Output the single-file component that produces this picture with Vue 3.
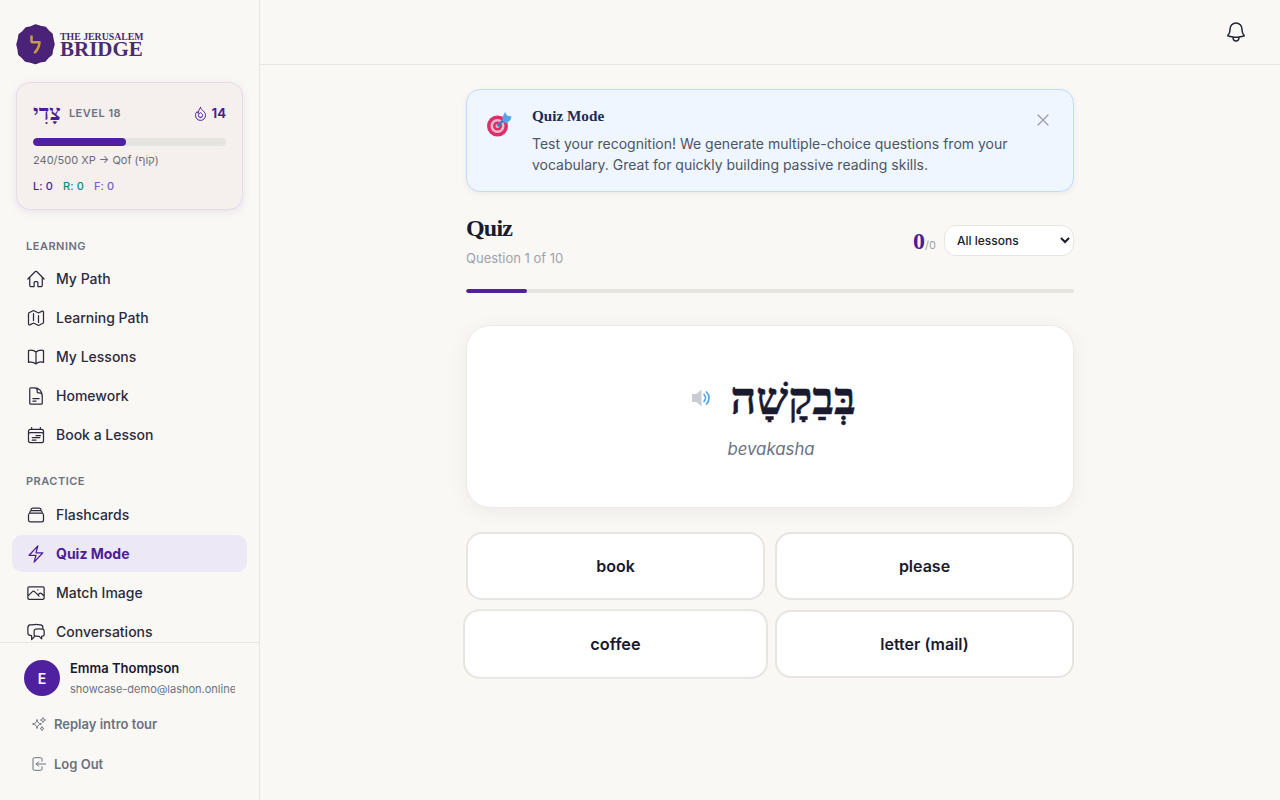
<script setup>
import { ref } from 'vue';

const learning = [
  { label: 'My Path', icon: 'home' },
  { label: 'Learning Path', icon: 'map' },
  { label: 'My Lessons', icon: 'book' },
  { label: 'Homework', icon: 'file' },
  { label: 'Book a Lesson', icon: 'calendar' },
];
const practice = [
  { label: 'Flashcards', icon: 'cards' },
  { label: 'Quiz Mode', icon: 'bolt', active: true },
  { label: 'Match Image', icon: 'image' },
  { label: 'Conversations', icon: 'chat' },
];
const icons = {
  home: 'M2.25 12 11.2 3.05a1.13 1.13 0 0 1 1.6 0L21.75 12M4.5 9.75V19.9c0 .6.5 1.1 1.1 1.1h4.15v-4.9c0-.6.5-1.1 1.1-1.1h2.3c.6 0 1.1.5 1.1 1.1V21h4.15c.6 0 1.1-.5 1.1-1.1V9.75',
  map: 'M9 6.75V15m6-6v8.25m.5 3.5 4.87-2.44c.38-.19.63-.58.63-1V4.8c0-.83-.88-1.38-1.63-1l-3.87 1.94c-.32.16-.69.16-1 0L9.5 3.25a1.13 1.13 0 0 0-1 0L3.63 5.69c-.38.19-.63.58-.63 1V19.2c0 .83.88 1.38 1.63 1L8.5 18.26c.32-.16.69-.16 1 0l5 2.49c.32.16.69.16 1 0Z',
  book: 'M12 6.04A8.97 8.97 0 0 0 6 3.75c-1.05 0-2.06.18-3 .51v14.25A9 9 0 0 1 6 18c2.3 0 4.4.87 6 2.29m0-14.25a8.97 8.97 0 0 1 6-2.29c1.05 0 2.06.18 3 .51v14.25A9 9 0 0 0 18 18a8.97 8.97 0 0 0-6 2.29m0-14.25v14.25',
  file: 'M19.5 14.25v-2.625a3.375 3.375 0 0 0-3.375-3.375h-1.5A1.125 1.125 0 0 1 13.5 7.125v-1.5a3.375 3.375 0 0 0-3.375-3.375H8.25m0 12.75h7.5m-7.5 3H12M10.5 2.25H5.625c-.621 0-1.125.504-1.125 1.125v17.25c0 .621.504 1.125 1.125 1.125h12.75c.621 0 1.125-.504 1.125-1.125V11.25a9 9 0 0 0-9-9Z',
  calendar: 'M6.75 3v2.25M17.25 3v2.25M3 18.75V7.5a2.25 2.25 0 0 1 2.25-2.25h13.5A2.25 2.25 0 0 1 21 7.5v11.25M3 18.75A2.25 2.25 0 0 0 5.25 21h13.5A2.25 2.25 0 0 0 21 18.75M3 18.75v-7.5A2.25 2.25 0 0 1 5.25 9h13.5A2.25 2.25 0 0 1 21 11.25v7.5m-9-6h5.25M7.5 15h9M7.5 18h4.5',
  cards: 'M6 6.878V6a2.25 2.25 0 0 1 2.25-2.25h7.5A2.25 2.25 0 0 1 18 6v.878m-12 0c.235-.083.487-.128.75-.128h10.5c.263 0 .515.045.75.128m-12 0A2.25 2.25 0 0 0 4.5 9v.878m13.5-3A2.25 2.25 0 0 1 19.5 9v.878m0 0a2.246 2.246 0 0 0-.75-.128H5.25c-.263 0-.515.045-.75.128m15 0A2.25 2.25 0 0 1 21 12v6a2.25 2.25 0 0 1-2.25 2.25H5.25A2.25 2.25 0 0 1 3 18v-6c0-.98.626-1.813 1.5-2.122',
  bolt: 'M3.75 13.5 14.25 2.25 12 10.5h8.25L9.75 21.75 12 13.5H3.75Z',
  image: 'M2.25 15.75l5.16-5.16a2.25 2.25 0 0 1 3.18 0l5.16 5.16m-1.5-1.5 1.41-1.41a2.25 2.25 0 0 1 3.18 0l2.91 2.91M3.75 19.5h16.5a1.5 1.5 0 0 0 1.5-1.5V6a1.5 1.5 0 0 0-1.5-1.5H3.75A1.5 1.5 0 0 0 2.25 6v12c0 .83.67 1.5 1.5 1.5ZM14.25 8.25h.01',
  chat: 'M20.25 8.51c.88.28 1.5 1.13 1.5 2.1v4.29c0 1.14-.85 2.1-1.98 2.19-.34.03-.68.05-1.02.07V20.25l-3-3c-1.35 0-2.69-.06-4.02-.16a2.1 2.1 0 0 1-.83-.25M20.25 8.51a2.1 2.1 0 0 0-.48-.1 48.6 48.6 0 0 0-8.04 0c-1.13.1-1.98 1.05-1.98 2.19v4.29c0 .84.46 1.58 1.15 1.95M20.25 8.51V6.63c0-1.62-1.15-3.03-2.76-3.24A48.4 48.4 0 0 0 11.25 3c-2.11 0-4.19.14-6.24.39-1.61.21-2.76 1.62-2.76 3.24v6.24c0 1.62 1.15 3.03 2.76 3.24.58.08 1.16.14 1.74.19V21l4.15-4.16',
};

const answers = ['book', 'please', 'coffee', 'letter (mail)'];
const lesson = ref('all');
</script>

<template>
  <div class="layout">
    <aside class="sidebar">
      <div class="sidebar-top">
        <div class="logo">
          <svg class="seal" width="39" height="41" viewBox="0 0 39 41">
            <path d="M19.500 1l5 1.500 5 1 3 3.500 3.500 3 .8 5 1.200 5.500-1.500 5-.8 5-3.700 3-3 3.500-5 .8-4.500 1.700-5-1.500-5-1-3.200-3.500-3.500-3-.6-5L1 20.500l1.400-5 .8-5 3.800-3 3-3.500 5-1z" fill="#4a2378" stroke="#47206f" stroke-width="1.500" stroke-linejoin="round"/>
            <path d="M15.500 12.500v4.200c0 1 .6 1.600 1.700 1.600h6.300c-.2 4-1.700 7.200-4.500 10" fill="none" stroke="#c99a45" stroke-width="2.600" stroke-linecap="round" stroke-linejoin="round"/>
          </svg>
          <div class="logo-text">
            <span class="logo-small">THE JERUSALEM</span>
            <span class="logo-big">BRIDGE</span>
          </div>
        </div>

        <div class="level-card">
          <div class="level-row">
            <span class="level-letter" lang="he">צָדִי</span>
            <span class="level-label">LEVEL 18</span>
            <svg class="flame" width="15" height="15" viewBox="0 0 24 24" fill="none" stroke="#4c1d95" stroke-width="1.600" stroke-linecap="round" stroke-linejoin="round">
              <path d="M12 2.500c.5 3 3 4 5 6 2 2.200 3 4.200 3 6.500a8 8 0 0 1-16 0c0-2.500 1-4.500 2.500-6 .3 1.500 1 2.500 2 3 0-3.500 1-7 3.500-9.500Z"/>
              <path d="M12 18.500a3.500 3.500 0 0 0 3.500-3.500c0-2-1.800-2.800-3.500-4.500-1 1.800-3.500 2.500-3.500 4.500a3.500 3.500 0 0 0 3.500 3.500Z"/>
            </svg>
            <span class="streak">14</span>
          </div>
          <div class="xp-track"><div class="xp-fill"></div></div>
          <div class="xp-text">240/500 XP → Qof (<span lang="he">קוֹף</span>)</div>
          <div class="skills">
            <span class="skill-l">L: 0</span>
            <span class="skill-r">R: 0</span>
            <span class="skill-f">F: 0</span>
          </div>
        </div>
      </div>

      <nav class="nav">
        <div class="nav-title">LEARNING</div>
        <a v-for="item in learning" :key="item.label" class="nav-item">
          <svg width="20" height="20" viewBox="0 0 24 24" fill="none" stroke="currentColor" stroke-width="1.500" stroke-linecap="round" stroke-linejoin="round"><path :d="icons[item.icon]" /></svg>
          {{ item.label }}
        </a>
        <div class="nav-title second">PRACTICE</div>
        <a v-for="item in practice" :key="item.label" class="nav-item" :class="{ active: item.active }">
          <svg width="20" height="20" viewBox="0 0 24 24" fill="none" stroke="currentColor" stroke-width="1.500" stroke-linecap="round" stroke-linejoin="round"><path :d="icons[item.icon]" /></svg>
          {{ item.label }}
        </a>
      </nav>

      <div class="sidebar-foot">
        <div class="user">
          <div class="avatar">E</div>
          <div class="user-info">
            <div class="user-name">Emma Thompson</div>
            <div class="user-mail">showcase-demo@lashon.online</div>
          </div>
        </div>
        <button class="foot-btn">
          <svg width="16" height="16" viewBox="0 0 24 24" fill="none" stroke="currentColor" stroke-width="1.500" stroke-linejoin="round"><path d="M9.813 15.904 9 18.75l-.813-2.846a4.5 4.5 0 0 0-3.09-3.09L2.25 12l2.846-.813a4.5 4.5 0 0 0 3.09-3.09L9 5.25l.813 2.846a4.5 4.5 0 0 0 3.09 3.09L15.750 12l-2.846.813a4.5 4.5 0 0 0-3.09 3.09ZM18.259 8.715 18 9.750l-.259-1.035a3.375 3.375 0 0 0-2.455-2.456L14.250 6l1.036-.259a3.375 3.375 0 0 0 2.455-2.456L18 2.250l.259 1.035a3.375 3.375 0 0 0 2.456 2.456L21.750 6l-1.035.259a3.375 3.375 0 0 0-2.456 2.456ZM16.894 20.567 16.500 21.750l-.394-1.183a2.250 2.250 0 0 0-1.423-1.423L13.500 18.750l1.183-.394a2.250 2.250 0 0 0 1.423-1.423l.394-1.183.394 1.183a2.250 2.250 0 0 0 1.423 1.423l1.183.394-1.183.394a2.250 2.250 0 0 0-1.423 1.423Z"/></svg>
          Replay intro tour
        </button>
        <button class="foot-btn">
          <svg width="16" height="16" viewBox="0 0 24 24" fill="none" stroke="currentColor" stroke-width="1.500" stroke-linecap="round" stroke-linejoin="round"><path d="M16.500 8V4.500A2 2 0 0 0 14.500 2.500H5A2 2 0 0 0 3 4.500v15a2 2 0 0 0 2 2h9.500a2 2 0 0 0 2-2V16M22 12H8m0 0 3.500-3.500M8 12l3.500 3.500"/></svg>
          Log Out
        </button>
      </div>
    </aside>

    <div class="page">
      <header class="topbar">
        <svg width="24" height="24" viewBox="0 0 24 24" fill="none" stroke="#1f2430" stroke-width="1.500" stroke-linecap="round" stroke-linejoin="round">
          <path d="M14.860 17.080a24 24 0 0 0 5.450-1.310A8.970 8.970 0 0 1 18 9.750V9A6 6 0 0 0 6 9v.75a8.970 8.970 0 0 1-2.310 6.020c1.730.64 3.560 1.080 5.450 1.310m5.720 0a24.250 24.250 0 0 1-5.720 0m5.720 0a3 3 0 1 1-5.720 0"/>
        </svg>
      </header>

      <main class="content">
        <section class="banner">
          <svg class="target" width="25" height="25" viewBox="0 0 25 25">
            <circle cx="10.500" cy="14" r="10.500" fill="#dd2e6a"/>
            <circle cx="10.500" cy="14" r="7" fill="#e8bccb"/>
            <circle cx="10.500" cy="14" r="4.500" fill="#dd2e6a"/>
            <circle cx="10.500" cy="14" r="2" fill="#e8bccb"/>
            <path d="M10.500 14 19 5.500" stroke="#3f7fc4" stroke-width="2.500"/>
            <path d="M15.500 5 18 0l2 3.500 4.500 1-1 3.500-4.500 3.500-3.500-3z" fill="#55a6e6"/>
          </svg>
          <div class="banner-body">
            <h3>Quiz Mode</h3>
            <p>Test your recognition! We generate multiple-choice questions from your vocabulary. Great for quickly building passive reading skills.</p>
          </div>
          <svg class="close" width="20" height="20" viewBox="0 0 24 24" fill="none" stroke="#9c9ca8" stroke-width="1.500" stroke-linecap="round"><path d="M6 6l12 12M18 6 6 18"/></svg>
        </section>

        <div class="quiz-head">
          <div>
            <h1>Quiz</h1>
            <div class="question-no">Question 1 of 10</div>
          </div>
          <div class="score">
            <span class="score-val"><span class="score-num">0</span><span class="score-of">/0</span></span>
            <select v-model="lesson" class="lesson-select">
              <option value="all">All lessons</option>
            </select>
          </div>
        </div>

        <div class="quiz-track"><div class="quiz-fill"></div></div>

        <section class="word-card">
          <div class="word-row">
            <svg width="20" height="20" viewBox="0 0 20 20">
              <path d="M1 6h4.500L10.500 1.500v17l-5-4.500H1z" fill="#c9cbd3"/>
              <path d="M13 6.500a5 5 0 0 1 0 7M15.500 4a8.500 8.500 0 0 1 0 12" fill="none" stroke="#4ea3e6" stroke-width="1.700" stroke-linecap="round"/>
            </svg>
            <span class="hebrew" lang="he" dir="rtl">בְּבַקָשָׁה</span>
          </div>
          <div class="translit">bevakasha</div>
        </section>

        <div class="answers">
          <button v-for="a in answers" :key="a" class="answer" :class="{ hovered: a === 'coffee' }">{{ a }}</button>
        </div>
      </main>
    </div>
  </div>
</template>

<style>
html, body { margin: 0; height: 100%; background: #faf8f5; }
</style>

<style scoped>
.layout {
  display: flex;
  height: 800px;
  overflow: hidden;
  font-family: Inter, "Liberation Sans", sans-serif;
  color: #1a1a2e;
  background: #faf8f5;
}
.sidebar {
  width: 260px;
  box-sizing: border-box;
  flex-shrink: 0;
  border-right: 1px solid #e7e5df;
  display: flex;
  flex-direction: column;
}
.sidebar-top { padding: 24px 16px 0; }
.logo { display: flex; align-items: center; gap: 5px; height: 40px; }
.logo-text { display: flex; flex-direction: column; font-family: "Liberation Serif", serif; font-weight: 700; color: #4a2c72; margin-bottom: 2px; }
.logo-small { font-size: 9.800px; line-height: 11px; }
.logo-big { font-size: 21px; line-height: 14px; }
.level-card {
  margin-top: 18px;
  height: 128px;
  box-sizing: border-box;
  padding: 16px;
  border: 1px solid #e4dde4;
  border-radius: 14px;
  background: #f5f0ee;
  box-shadow: 0 2px 8px rgba(76, 29, 149, 0.1);
}
.level-row { display: flex; align-items: center; height: 28px; }
.level-letter { font-family: "Liberation Serif", "DejaVu Serif", serif; font-weight: 700; font-size: 22px; color: #4c1d95; margin-right: 8px; line-height: 28px; }
.level-label { font-size: 11px; font-weight: 600; letter-spacing: 0.500px; color: #6b7280; flex: 1; }
.flame { margin-right: 4px; }
.streak { font-size: 13px; font-weight: 700; color: #4c1d95; }
.xp-track { height: 8px; margin-top: 11px; border-radius: 4px; background: #e5e5e0; overflow: hidden; }
.xp-fill { width: 48%; height: 100%; border-radius: 4px; background: #4f21a0; }
.xp-text { margin-top: 6px; font-size: 11px; line-height: 16px; color: #6b6b73; }
.skills { display: flex; gap: 10px; margin-top: 10px; font-size: 11px; font-weight: 500; letter-spacing: 0.100px; line-height: 16px; }
.skill-l { color: #4c1d95; }
.skill-r { color: #0f8a7a; }
.skill-f { color: #7c5cc4; }

.nav { flex: 1; min-height: 0; overflow: hidden; padding: 0 12px; }
.nav-title { font-size: 11px; font-weight: 600; letter-spacing: 0.500px; color: #6b7280; padding: 0 14px; margin-top: 29px; margin-bottom: 7px; line-height: 14px; }
.nav-title.second { margin-top: 21px; margin-bottom: 8px; }
.nav-item {
  display: flex;
  align-items: center;
  gap: 10px;
  height: 37px;
  margin-bottom: 2px;
  padding: 0 14px;
  border-radius: 10px;
  font-size: 14px;
  font-weight: 500;
  color: #2b2b3d;
}
.nav-item.active { background: #ece8f5; color: #4c1d95; font-weight: 700; }

.sidebar-foot { height: 158px; box-sizing: border-box; border-top: 1px solid #e7e5df; padding: 16px 24px 0; }
.user { display: flex; align-items: center; gap: 10px; }
.avatar { width: 36px; height: 36px; flex-shrink: 0; border-radius: 50%; background: #4f21a0; color: #fff; display: flex; align-items: center; justify-content: center; font-size: 14px; font-weight: 600; }
.user-info { min-width: 0; flex: 1; }
.user-name { font-size: 13px; font-weight: 600; line-height: 18px; color: #1a1a2e; }
.user-mail { margin-top: 4px; font-size: 11px; line-height: 16px; color: #6b7280; white-space: nowrap; overflow: hidden; }
.foot-btn {
  display: flex;
  align-items: center;
  gap: 7px;
  width: 100%;
  height: 40px;
  padding: 0 0 0 7px;
  border: 0;
  background: none;
  font: 600 13px Inter, sans-serif;
  color: #6b7280;
}
.user + .foot-btn { margin-top: 7px; }

.page { flex: 1; min-width: 0; display: flex; flex-direction: column; }
.topbar { height: 65px; box-sizing: border-box; flex-shrink: 0; border-bottom: 1px solid #e7e5df; display: flex; align-items: center; justify-content: flex-end; padding-right: 32px; }
.content { width: 608px; margin: 0 auto; padding-top: 24px; }
.banner {
  display: flex;
  align-items: flex-start;
  box-sizing: border-box;
  height: 103px;
  padding: 16px 20px;
  border: 1px solid #bfdbfe;
  border-radius: 14px;
  background: #eff6ff;
  box-shadow: 0 2px 6px rgba(0, 0, 0, 0.06);
}
.target { margin-top: 6px; margin-right: 20px; flex-shrink: 0; }
.banner-body { flex: 1; min-width: 0; }
.banner h3 { margin: 0; font: 700 15.200px/20px "Liberation Serif", serif; color: #1e2a55; }
.banner p { margin: 7px 0 0; font-size: 14px; line-height: 21px; color: #4b5563; }
.close { margin: 4px 0 0 16px; flex-shrink: 0; }

.quiz-head { display: flex; justify-content: space-between; align-items: center; margin-top: 20px; height: 55px; }
.quiz-head h1 { margin: 0; font: 700 24px/32px "Liberation Serif", serif; letter-spacing: -0.800px; color: #1a1a2e; }
.question-no { margin-top: 5px; font-size: 13px; line-height: 18px; color: #9ca3af; }
.score { display: flex; align-items: center; margin-top: 2px; }
.score-val { display: flex; align-items: baseline; }
.score-num { font: 700 24px/32px "Liberation Serif", serif; color: #4c1d95; }
.score-of { font-size: 11px; color: #9ca3af; margin-right: 8px; }
.lesson-select {
  width: 130px;
  height: 31px;
  padding: 0 8px;
  border: 1px solid #e7e5df;
  border-radius: 12px;
  background: #fff;
  font: 500 12px Inter, sans-serif;
  color: #1a1a2e;
}
.quiz-track { height: 4px; margin-top: 22px; border-radius: 2px; background: #e5e5e0; overflow: hidden; }
.quiz-fill { width: 10%; height: 100%; background: #4f21a0; border-radius: 2px; }

.word-card {
  margin-top: 32px;
  height: 183px;
  box-sizing: border-box;
  border: 1px solid #eceae5;
  border-radius: 24px;
  background: #fff;
  box-shadow: 0 4px 20px rgba(0, 0, 0, 0.06);
  display: flex;
  flex-direction: column;
  align-items: center;
  padding-top: 42px;
}
.word-row { display: flex; align-items: center; gap: 19px; height: 60px; padding-left: 7px; }
.hebrew { font-family: "Liberation Serif", "DejaVu Serif", serif; font-weight: 700; font-size: 45px; line-height: 60px; color: #1a1a2e; padding-top: 2px; -webkit-text-stroke: 0.500px #1a1a2e; }
.translit { margin-top: 9px; padding-left: 2px; font-size: 16.800px; font-style: italic; line-height: 24px; color: #6b7280; }

.answers { display: grid; grid-template-columns: 1fr 1fr; gap: 10px; margin-top: 24px; }
.answer {
  height: 68px;
  border: 2px solid #e7e5df;
  border-radius: 16px;
  background: #fff;
  font: 600 16px Inter, sans-serif;
  color: #1a1a2e;
}
.answer.hovered { transform: scale(1.02); }
</style>
